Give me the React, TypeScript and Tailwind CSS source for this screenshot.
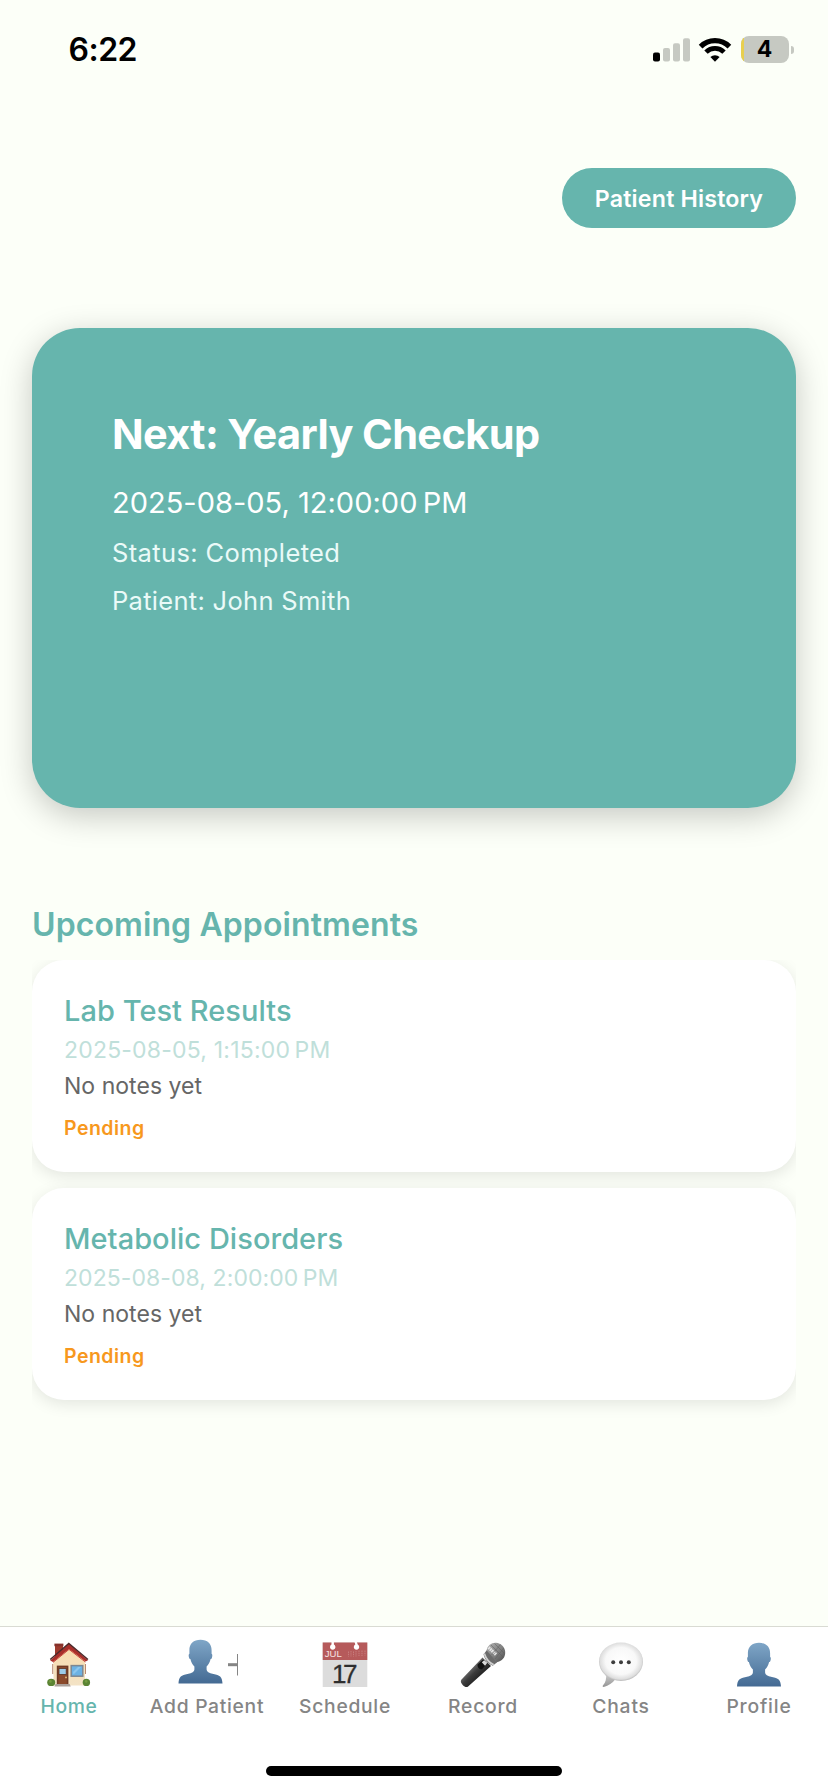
import type { ReactNode } from 'react';

function SignalIcon() {
  return (
    <svg className="h-[24px] w-[38px]" viewBox="0 0 38 24">
      <rect x="0" y="14.5" width="7" height="9" rx="2" fill="#000" />
      <rect x="10" y="10" width="7" height="13.5" rx="2" fill="#c6c9c2" />
      <rect x="20" y="5.2" width="7" height="18.3" rx="2" fill="#c6c9c2" />
      <rect x="30" y="0.3" width="7" height="23.2" rx="2" fill="#c6c9c2" />
    </svg>
  );
}

function WifiIcon() {
  return (
    <svg className="h-[24px] w-[32px] overflow-visible" viewBox="0 0 32 24" fill="none" stroke="#000">
      <path d="M1.6 8.6 A20.4 20.4 0 0 1 30.4 8.6" strokeWidth="5.2" />
      <path d="M7 14.1 A12.8 12.8 0 0 1 25 14.1" strokeWidth="4.8" />
      <path d="M11.4 19 A6.6 6.6 0 0 1 20.6 19 L16 23.8 Z" fill="#000" stroke="none" />
    </svg>
  );
}

function HouseIcon() {
  return (
    <svg className="h-[46px] w-[46px]" viewBox="0 0 46 46">
      <defs>
        <linearGradient id="wall" x1="0" y1="0" x2="0" y2="1">
          <stop offset="0" stopColor="#f8dcae" />
          <stop offset="1" stopColor="#f3e3c6" />
        </linearGradient>
      </defs>
      <rect x="9" y="2.5" width="8" height="13" fill="#9d3a2e" />
      <rect x="8.4" y="1.6" width="9" height="2.6" fill="#86312a" />
      <path d="M6.8 22v10M39.4 22v10" stroke="#b98a72" strokeWidth="1.2" />
      <path d="M7.5 18.5 23 5.5l16 13V43.500H7.500Z" fill="url(#wall)" />
      <path d="M4.200 18.600 22.800 1.600 42 18.200l-2.400 1.400L23 7 7 20Z" fill="#a92f2b" />
      <path d="M4.200 17.400 22.800 1.400 42 17.400" fill="none" stroke="#4b2a2a" strokeWidth="1.300" />
      <path d="M7 20.400 23 7.400l16.400 12.600" fill="none" stroke="#c9463c" strokeWidth="1" />
      <rect x="10.800" y="23.600" width="11.600" height="19" fill="#6f3a24" />
      <rect x="12.400" y="25" width="8.400" height="17.400" fill="#8b4a2c" />
      <rect x="13" y="26.400" width="7.200" height="6" fill="#9ccbe8" stroke="#5c3020" strokeWidth="0.800" />
      <circle cx="20" cy="35.400" r="0.900" fill="#e8c27c" />
      <rect x="25.200" y="23.600" width="11.600" height="10.600" fill="#6cb2e4" stroke="#7e8791" strokeWidth="1.500" />
      <path d="m27 30 5-5h3l-7.500 7.500Z" fill="#8cc6ee" />
      <ellipse cx="5.200" cy="40.400" rx="4" ry="3.700" fill="#5b8434" />
      <ellipse cx="40.400" cy="40.400" rx="3.700" ry="3.700" fill="#5b8434" />
      <circle cx="4.400" cy="39.400" r="1.300" fill="#759c40" />
      <circle cx="40.200" cy="39.400" r="1.300" fill="#759c40" />
      <path d="M9.600 42h14l1.200 2.400H8.400Z" fill="#aaa09b" />
    </svg>
  );
}

function PersonShape({ id }: { id: string }) {
  return (
    <>
      <defs>
        <linearGradient id={id} x1="0" y1="0" x2="0" y2="1">
          <stop offset="0" stopColor="#7fa6c7" />
          <stop offset="1" stopColor="#446a93" />
        </linearGradient>
      </defs>
      <path
        d="M23 .8c-6.800 0-11.300 4-11.100 10.700v3.200c-.9.500-.9 2.200-.4 3.700.3 1 .8 1.600 1.400 1.700.7 3.300 2.100 5.700 4 7.500v2.800c0 2.300-2.300 3.600-6.900 4.500-6.100 1.100-8.700 2.700-9 9.500h44c-.3-6.800-2.900-8.400-9-9.500-4.600-.9-6.900-2.200-6.900-4.500v-2.800c1.900-1.800 3.300-4.200 4-7.500.6-.1 1.100-.7 1.400-1.700.5-1.500.5-3.200-.4-3.700v-3.200C34.300 4.800 29.800.8 23 .8Z"
        fill={`url(#${id})`}
      />
    </>
  );
}

function PersonIcon() {
  return (
    <svg className="h-[46px] w-[46px]" viewBox="0 0 46 46">
      <PersonShape id="profile" />
    </svg>
  );
}

function AddPersonIcon() {
  return (
    <svg className="h-[46px] w-[60px] overflow-visible" viewBox="0 0 60 46">
      <g transform="translate(0.500 -3)">
        <PersonShape id="add-person" />
      </g>
      <rect x="51" y="21.200" width="9.500" height="3" fill="#858585" />
      <rect x="60" y="12" width="1" height="21.500" fill="#858585" />
    </svg>
  );
}

function CalendarIcon() {
  return (
    <svg className="h-[46px] w-[46px]" viewBox="0 0 46 46">
      <rect x="0.700" y="0.500" width="44.600" height="44.500" fill="#dcdcdc" />
      <rect x="0.700" y="0.500" width="44.600" height="17.500" fill="#b65a5b" />
      <path d="M9.500 0h2.400v2.600a2.700 2.700 0 1 1-2.400 0ZM32.500 0h2.400l.8 2.600a2.700 2.700 0 1 1-2.400 0Z" fill="#fff" />
      <text x="2.800" y="14.900" fontSize="9.200" fontFamily="'Liberation Sans', sans-serif" fill="#f6e3e3" textLength="17" lengthAdjust="spacingAndGlyphs">
        JUL
      </text>
      <path d="M26.500 9.500v5M29 9v5.500M31.500 9.500v5M34 9v5.500M37 8.500v5.500M40 8.500v5.500M43 8.500v5" stroke="#cb8585" strokeWidth="0.800" strokeDasharray="1.500 .7" />
      <text x="10" y="40.600" fontSize="26" fontFamily="'Liberation Sans', sans-serif" fill="#2e2e2e" stroke="#2e2e2e" strokeWidth="0.300" textLength="25.500" lengthAdjust="spacing">
        17
      </text>
    </svg>
  );
}

function MicIcon() {
  return (
    <svg className="h-[46px] w-[46px]" viewBox="0 0 46 46">
      <defs>
        <linearGradient id="mic-body" x1="0.300" y1="0.300" x2="0.700" y2="0.700">
          <stop offset="0" stopColor="#7a7a7a" />
          <stop offset="0.450" stopColor="#3c3c3c" />
          <stop offset="1" stopColor="#1c1c1c" />
        </linearGradient>
        <linearGradient id="mic-head" x1="0" y1="0" x2="1" y2="1">
          <stop offset="0" stopColor="#b3b3b3" />
          <stop offset="0.500" stopColor="#858585" />
          <stop offset="1" stopColor="#4a4a4a" />
        </linearGradient>
      </defs>
      <path d="M22.500 15.500 1.300 37.800c-1.200 1.600 0 3.800 1.600 5.400s3.700 2.400 5.200 1.200L31 24Z" fill="url(#mic-body)" />
      <path d="M26.500 8.500C27.500 3.500 31.500 .4 36 .7c5 .4 9 4.500 9.200 9.300.2 5.500-3.200 9.300-8.700 10.200Z" fill="url(#mic-head)" />
      <path d="m23.500 12.500 3.200-4.300 10.500 12-4.500 3.500c-4.500-2-7.700-5.700-9.200-11.200Z" fill="#6b6b6b" />
      <path d="M24.300 11.400c1.600 5 4.700 9 9.400 11.400" fill="none" stroke="#d0d0d0" strokeWidth="1.800" />
      <path d="m28.500 5.500 7.500 7" stroke="#e6e6e6" strokeWidth="3.200" strokeDasharray="1.700 .5" />
      <path d="m31 3 12 12M34.500 1.500l10 10M44 6 35 17M40.500 2.500 31.500 13" stroke="#5d5d5d" strokeWidth="0.500" />
      <path d="m17.500 22.500 5.500-4.800 4.500 3.300-5.500 6.200c-2.300.5-4.700-1.700-4.500-4.700Z" fill="#111" />
      <path d="m21.800 20.200 2.400-1.900 3.200 2.500-2.400 3Z" fill="#d9d9d9" />
    </svg>
  );
}

function ChatIcon() {
  return (
    <svg className="h-[46px] w-[46px]" viewBox="0 0 46 46">
      <defs>
        <radialGradient id="bubble" cx="0.500" cy="0.480" r="0.540">
          <stop offset="0" stopColor="#ffffff" />
          <stop offset="0.650" stopColor="#f8f8f8" />
          <stop offset="0.880" stopColor="#dedede" />
          <stop offset="1" stopColor="#a8a8a8" />
        </radialGradient>
        <linearGradient id="tail" x1="0" y1="0" x2="0" y2="1">
          <stop offset="0" stopColor="#d2d2d2" />
          <stop offset="1" stopColor="#959595" />
        </linearGradient>
      </defs>
      <path d="M8 31c.6 5.500-.2 9.500-3.100 12.500-.6.700-.2 1.500.8 1.400 5-1 8.700-3.800 11.500-7.300Z" fill="url(#tail)" />
      <ellipse cx="23" cy="19.700" rx="22" ry="19.200" fill="url(#bubble)" />
      <circle cx="15.200" cy="20.300" r="2" fill="#3d3d3d" />
      <circle cx="23" cy="20.300" r="2" fill="#3d3d3d" />
      <circle cx="30.800" cy="20.300" r="2" fill="#3d3d3d" />
    </svg>
  );
}

interface Appointment {
  title: string;
  date: string;
  dateSpacing: string;
}

const appointments: Appointment[] = [
  { title: 'Lab Test Results', date: '2025-08-05, 1:15:00\u202fPM', dateSpacing: 'tracking-[0.2px]' },
  { title: 'Metabolic Disorders', date: '2025-08-08, 2:00:00\u202fPM', dateSpacing: 'tracking-[0.07px]' },
];

function AppointmentCard({ title, date, dateSpacing }: Appointment) {
  return (
    <article className="h-[212px] rounded-[32px] bg-white px-8 pt-[32.5px] shadow-[0_4px_16px_rgba(0,0,0,0.1)]">
      <h3 className="text-[29px] leading-[36px] font-medium tracking-[0.04px] text-[#66b5ad]">{title}</h3>
      <p className={`mt-[7px] text-[23px] leading-[28px] text-[#c0dfda] ${dateSpacing}`}>{date}</p>
      <p className="mt-[8px] text-[23px] leading-[28px] tracking-[0.03px] text-[#666666]">No notes yet</p>
      <p className="mt-[16px] text-[19.5px] leading-[24px] font-semibold tracking-[0.48px] text-[#f7981d]">Pending</p>
    </article>
  );
}

interface Tab {
  label: string;
  icon: ReactNode;
  style: string;
}

const tabs: Tab[] = [
  { label: 'Home', icon: <HouseIcon />, style: 'tracking-[0.6px] text-[#66b5ad]' },
  { label: 'Add Patient', icon: <AddPersonIcon />, style: 'tracking-[0.7px] text-[#858585]' },
  { label: 'Schedule', icon: <CalendarIcon />, style: 'tracking-[0.7px] text-[#858585]' },
  { label: 'Record', icon: <MicIcon />, style: 'tracking-[0.75px] text-[#858585]' },
  { label: 'Chats', icon: <ChatIcon />, style: 'tracking-[0.85px] text-[#858585]' },
  { label: 'Profile', icon: <PersonIcon />, style: 'tracking-[0.8px] text-[#858585]' },
];

export default function App() {
  return (
    <div className="flex h-[1792px] w-[828px] flex-col overflow-hidden bg-[#fcfff8] font-['Inter',sans-serif]">
      <header className="flex h-[99px] shrink-0 items-center justify-between pr-[34px] pl-[68.5px]">
        <span className="text-[32px] leading-[40px] font-semibold tracking-[-0.5px] text-black">6:22</span>
        <div className="flex items-center">
          <SignalIcon />
          <div className="ml-[8px]">
            <WifiIcon />
          </div>
          <div className="ml-[10px] flex h-[27px] w-[48px] overflow-hidden rounded-[8px] bg-[#c6c9c2]">
            <div className="w-[3px] bg-[#e8cf4e]" />
            <span className="flex-1 pr-[4px] text-center text-[23px] leading-[27px] font-bold text-black">4</span>
          </div>
          <div className="ml-[2px] h-[8px] w-[3px] rounded-r-full bg-[#c6c9c2]" />
        </div>
      </header>

      <div className="mt-[69px] flex shrink-0 justify-end pr-8">
        <button className="flex h-[60px] w-[234px] items-center justify-center rounded-full bg-[#66b5ad] pt-[1px] text-[23.2px] leading-[28px] font-semibold tracking-[0.18px] text-white">
          Patient History
        </button>
      </div>

      <section className="mx-8 mt-[100px] flex h-[480px] shrink-0 flex-col rounded-[48px] bg-[#66b5ad] px-[80px] pt-[80px] text-white shadow-[0_8px_32px_rgba(0,0,0,0.22)]">
        <h1 className="text-[41.5px] leading-[52px] font-bold tracking-[-0.62px]">Next: Yearly Checkup</h1>
        <p className="mt-[24.5px] text-[29px] leading-[36px] tracking-[0.01px]">{'2025-08-05, 12:00:00\u202fPM'}</p>
        <p className="mt-[16px] text-[25.5px] leading-[32px] tracking-[0.37px] text-[#eafaf8]">Status: Completed</p>
        <p className="mt-[16px] text-[25.5px] leading-[32px] tracking-[0.3px] text-[#eafaf8]">Patient: John Smith</p>
      </section>

      <h2 className="mt-[96.5px] ml-8 shrink-0 text-[32px] leading-[40px] font-semibold tracking-[0.1px] text-[#66b5ad]">
        Upcoming Appointments
      </h2>

      <main className="mx-8 mt-[15.5px] flex flex-1 flex-col gap-4 overflow-hidden">
        {appointments.map((item) => (
          <AppointmentCard key={item.title} {...item} />
        ))}
      </main>

      <footer className="flex h-[166px] shrink-0 flex-col items-center border-t border-[#d9dbd3] bg-white">
        <nav className="grid w-full grid-cols-6 pt-[15px]">
          {tabs.map((tab) => (
            <div key={tab.label} className="flex flex-col items-center">
              {tab.icon}
              <span className={`mt-[5.5px] text-[19.3px] leading-[24px] font-[450] whitespace-nowrap ${tab.style}`}>
                {tab.label}
              </span>
            </div>
          ))}
        </nav>
        <div className="mt-[48.5px] h-[10px] w-[296px] rounded-full bg-black" />
      </footer>
    </div>
  );
}
